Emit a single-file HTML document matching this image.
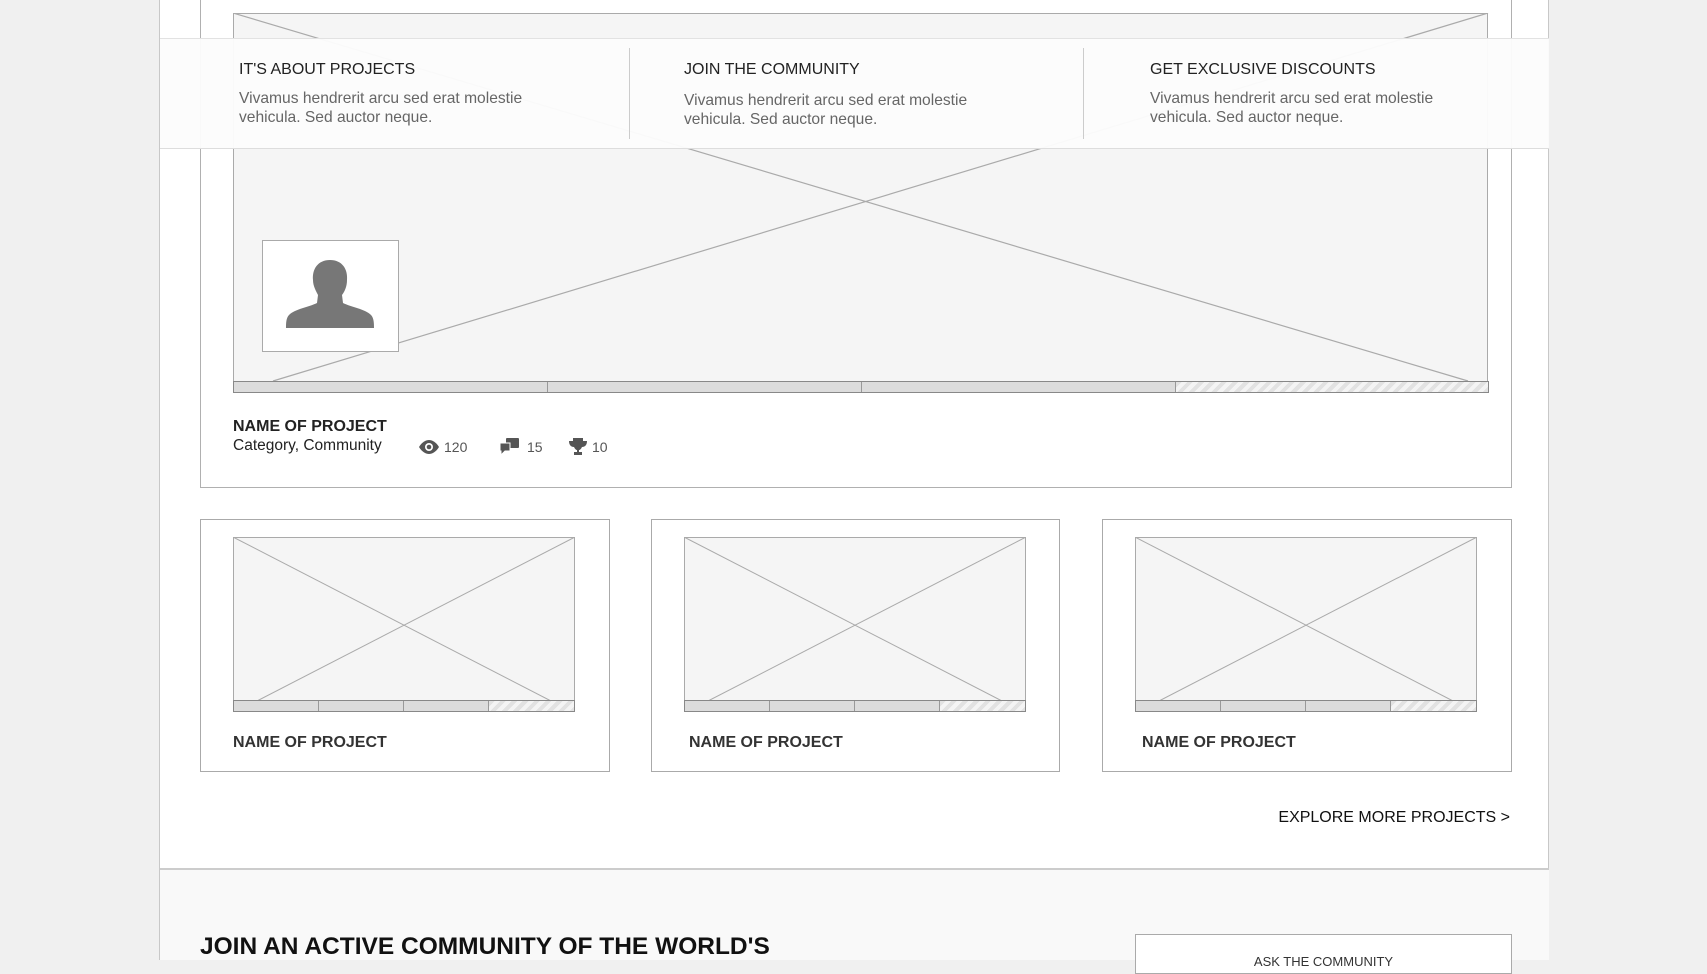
<!DOCTYPE html>
<html><head><meta charset="utf-8"><style>
*{margin:0;padding:0;box-sizing:border-box}
body{width:1707px;height:960px;background:#f0f0f0;position:relative;overflow:hidden;font-family:"Liberation Sans",Arial,sans-serif;color:#222}
.abs{position:absolute}
.page{left:159px;top:0;width:1390px;height:960px;background:#fff;border-left:1px solid #c8c8c8;border-right:1px solid #c8c8c8}
.stripes{background:repeating-linear-gradient(135deg,#e2e2e2 0 4px,#f4f4f4 4px 8px)}
.seg{background:#dcdcdc;border-right:1px solid #999}
.h{font-size:16px;color:#222}
.p{font-size:15.6px;color:#666;line-height:19px}
.nm{font-weight:bold;font-size:16px;color:#222}
.card{border:1px solid #aaa;background:#fff}
</style></head><body>
<div class="abs page"></div>
<div class="abs" style="left:200px;top:-2px;width:1312px;height:490px;border:1px solid #b0b0b0;background:#fff"></div>
<svg class="abs" style="left:233px;top:13px" width="1256" height="381">
<rect x="0.5" y="0.5" width="1254" height="368" fill="#f5f5f5" stroke="#aaa"/>
<line x1="0" y1="0" x2="1235" y2="368" stroke="#aaa" stroke-width="1.2"/>
<line x1="1255" y1="0" x2="40" y2="368" stroke="#aaa" stroke-width="1.2"/>
</svg>
<div class="abs" style="left:233px;top:381px;width:1256px;height:12px;border:1px solid #888;display:flex">
<div class="seg" style="width:314px"></div><div class="seg" style="width:314px"></div><div class="seg" style="width:314px"></div><div class="stripes" style="flex:1"></div>
</div>
<div class="abs" style="left:160px;top:38px;width:1389px;height:111px;background:rgba(252,252,252,0.96);border-top:1px solid #e2e2e2;border-bottom:1px solid #ddd"></div>
<div class="abs" style="left:629px;top:48px;width:1px;height:91px;background:#ccc"></div>
<div class="abs" style="left:1083px;top:48px;width:1px;height:91px;background:#ccc"></div>
<div class="abs h" style="left:239px;top:61px">IT'S ABOUT PROJECTS</div>
<div class="abs p" style="left:239px;top:89px">Vivamus hendrerit arcu sed erat molestie<br>vehicula. Sed auctor neque.</div>
<div class="abs h" style="left:684px;top:61px">JOIN THE COMMUNITY</div>
<div class="abs p" style="left:684px;top:91px">Vivamus hendrerit arcu sed erat molestie<br>vehicula. Sed auctor neque.</div>
<div class="abs h" style="left:1150px;top:61px">GET EXCLUSIVE DISCOUNTS</div>
<div class="abs p" style="left:1150px;top:89px">Vivamus hendrerit arcu sed erat molestie<br>vehicula. Sed auctor neque.</div>
<div class="abs" style="left:262px;top:240px;width:137px;height:112px;border:1px solid #aaa;background:#fff"></div>
<svg class="abs" style="left:280px;top:258px" width="100" height="74" viewBox="0 0 100 74">
<path d="M50 2c-12 0-18 9-17 20 0 6 3 11 5 15l-1 8c-8 4-22 6-28 12-3 3-3 9-3 13h88c0-4 0-10-3-13-6-6-20-8-28-12l-1-8c3-4 5-9 5-15 1-11-5-20-17-20z" fill="#777"/>
</svg>
<div class="abs nm" style="left:233px;top:418px">NAME OF PROJECT</div>
<div class="abs" style="left:233px;top:437px;font-size:15.5px;color:#222">Category, Community</div>
<svg class="abs" style="left:418px;top:440px" width="22" height="14" viewBox="0 0 22 14"><path d="M1 7C4 2 8 0 11 0s7 2 10 7c-3 5-7 7-10 7S4 12 1 7z" fill="#555"/><circle cx="11" cy="7" r="4" fill="#fff"/><circle cx="11" cy="7" r="2.3" fill="#555"/></svg>
<div class="abs" style="left:444px;top:439px;font-size:14px;color:#555">120</div>
<svg class="abs" style="left:500px;top:438px" width="20" height="17" viewBox="0 0 20 17"><rect x="6" y="0" width="13" height="10" rx="1" fill="#555"/><path d="M0 5h10v8H5l-4 4v-4H0z" fill="#555" stroke="#fff" stroke-width="1"/></svg>
<div class="abs" style="left:527px;top:439px;font-size:14px;color:#555">15</div>
<svg class="abs" style="left:569px;top:438px" width="18" height="17" viewBox="0 0 18 17"><path d="M4 0h10v3h4c0 4-2 6-5 6-1 2-2 3-3 3v2h3v3H5v-3h3v-2c-1 0-2-1-3-3C2 9 0 7 0 3h4z" fill="#555"/></svg>
<div class="abs" style="left:592px;top:439px;font-size:14px;color:#555">10</div>
<div class="abs card" style="left:200px;top:519px;width:410px;height:253px"></div>
<div class="abs card" style="left:651px;top:519px;width:409px;height:253px"></div>
<div class="abs card" style="left:1102px;top:519px;width:410px;height:253px"></div>
<svg class="abs" style="left:233px;top:537px" width="342" height="164"><rect x="0.5" y="0.5" width="341" height="163" fill="#f5f5f5" stroke="#aaa"/><line x1="0" y1="0" x2="318" y2="164" stroke="#aaa"/><line x1="342" y1="0" x2="24" y2="164" stroke="#aaa"/></svg>
<svg class="abs" style="left:684px;top:537px" width="342" height="164"><rect x="0.5" y="0.5" width="341" height="163" fill="#f5f5f5" stroke="#aaa"/><line x1="0" y1="0" x2="318" y2="164" stroke="#aaa"/><line x1="342" y1="0" x2="24" y2="164" stroke="#aaa"/></svg>
<svg class="abs" style="left:1135px;top:537px" width="342" height="164"><rect x="0.5" y="0.5" width="341" height="163" fill="#f5f5f5" stroke="#aaa"/><line x1="0" y1="0" x2="318" y2="164" stroke="#aaa"/><line x1="342" y1="0" x2="24" y2="164" stroke="#aaa"/></svg>
<div class="abs" style="left:233px;top:700px;width:342px;height:12px;border:1px solid #888;display:flex"><div class="seg" style="width:85px"></div><div class="seg" style="width:85px"></div><div class="seg" style="width:85px"></div><div class="stripes" style="flex:1"></div></div>
<div class="abs" style="left:684px;top:700px;width:342px;height:12px;border:1px solid #888;display:flex"><div class="seg" style="width:85px"></div><div class="seg" style="width:85px"></div><div class="seg" style="width:85px"></div><div class="stripes" style="flex:1"></div></div>
<div class="abs" style="left:1135px;top:700px;width:342px;height:12px;border:1px solid #888;display:flex"><div class="seg" style="width:85px"></div><div class="seg" style="width:85px"></div><div class="seg" style="width:85px"></div><div class="stripes" style="flex:1"></div></div>
<div class="abs nm" style="left:233px;top:734px;color:#333">NAME OF PROJECT</div>
<div class="abs nm" style="left:689px;top:734px;color:#333">NAME OF PROJECT</div>
<div class="abs nm" style="left:1142px;top:734px;color:#333">NAME OF PROJECT</div>
<div class="abs" style="left:1250px;width:260px;text-align:right;top:809px;font-size:16px;color:#111">EXPLORE MORE PROJECTS &gt;</div>
<div class="abs" style="left:160px;top:868px;width:1389px;height:92px;background:#f9f9f9;border-top:2px solid #ccc"></div>
<div class="abs" style="left:200px;top:933px;font-size:24.5px;font-weight:bold;color:#111">JOIN AN ACTIVE COMMUNITY OF THE WORLD'S</div>
<div class="abs" style="left:1135px;top:934px;width:377px;height:40px;border:1px solid #aaa;background:#fff"></div>
<div class="abs" style="left:1135px;width:377px;text-align:center;top:954px;font-size:13px;color:#333">ASK THE COMMUNITY</div>
</body></html>
